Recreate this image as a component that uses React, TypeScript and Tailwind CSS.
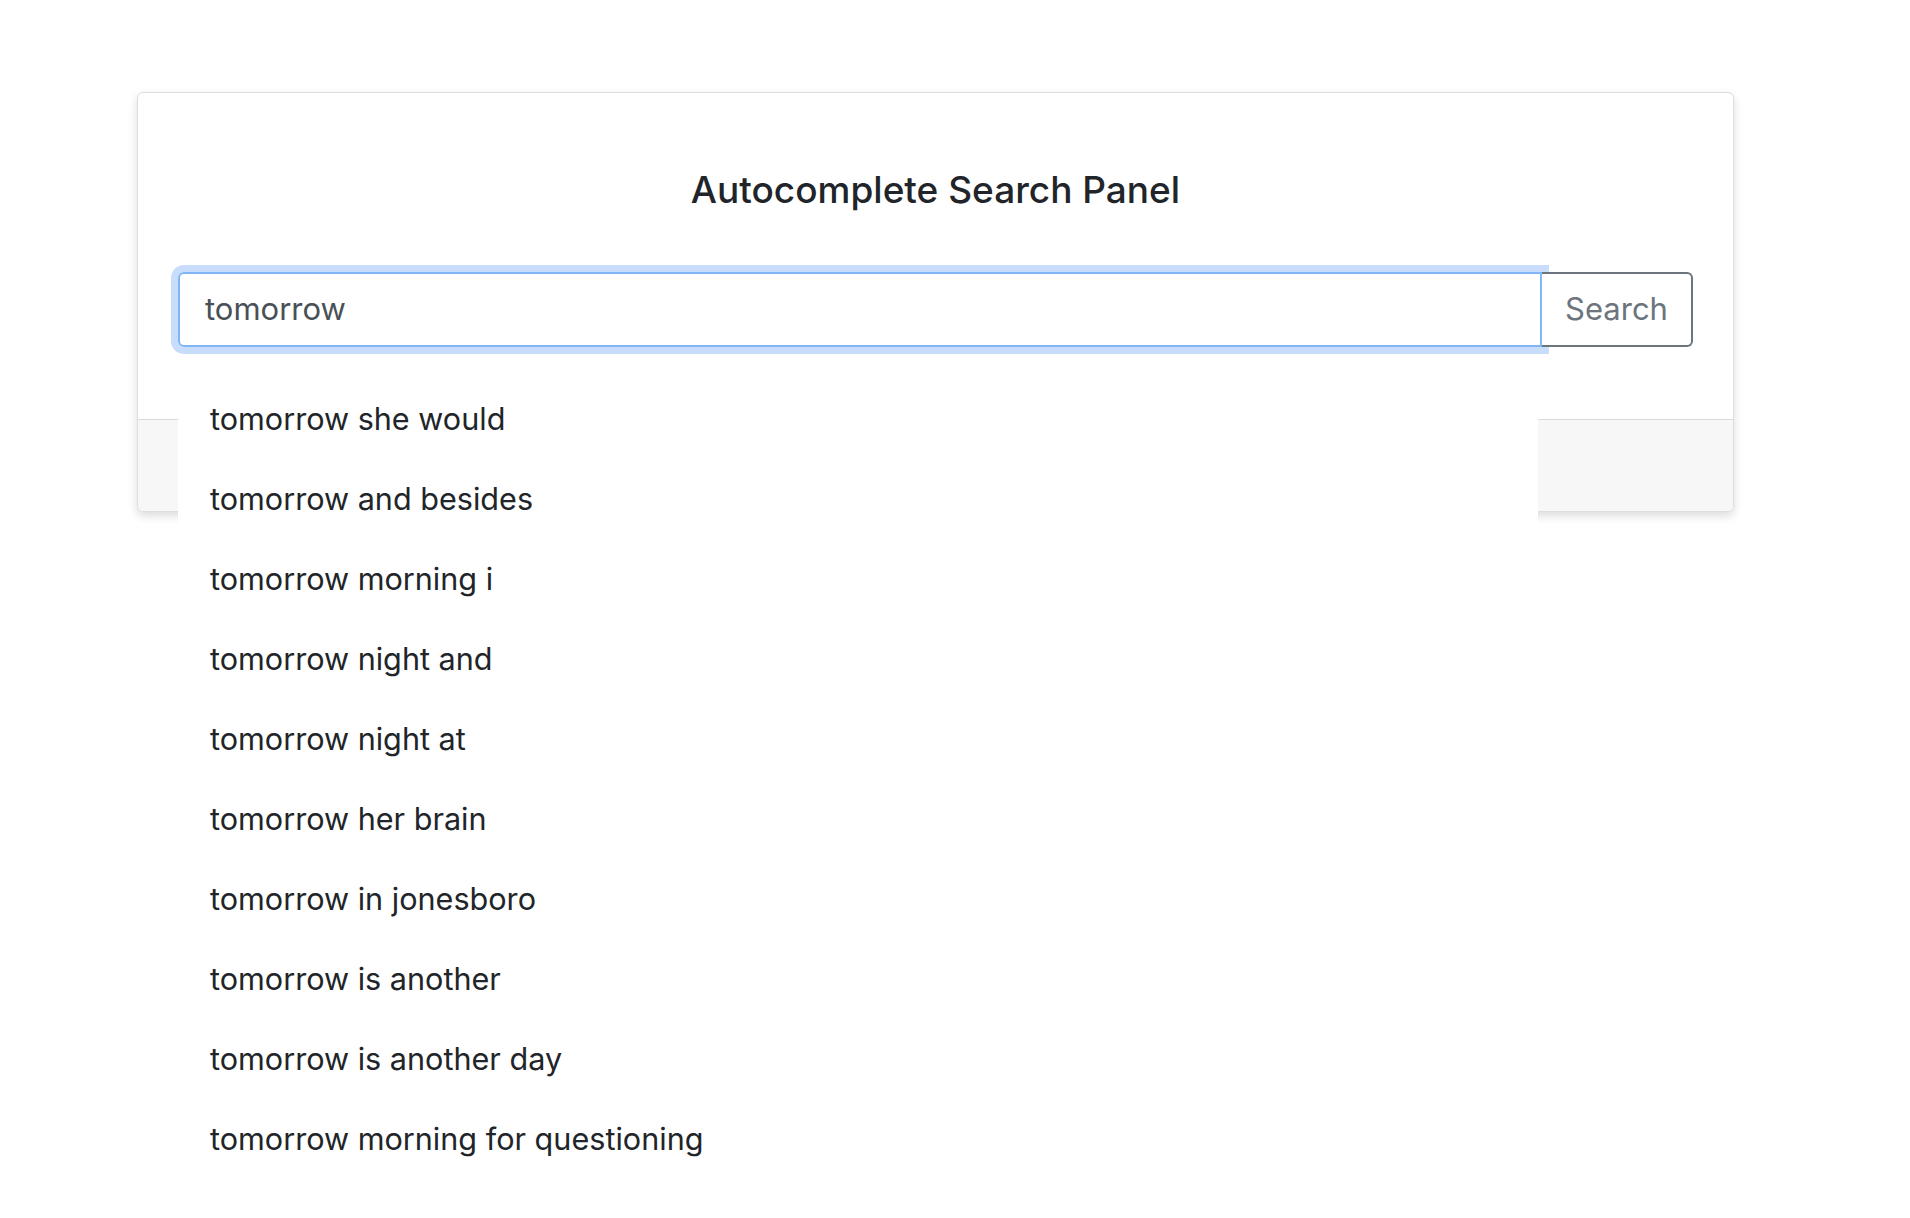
import { useState } from "react";

const suggestions = [
  "tomorrow she would",
  "tomorrow and besides",
  "tomorrow morning i",
  "tomorrow night and",
  "tomorrow night at",
  "tomorrow her brain",
  "tomorrow in jonesboro",
  "tomorrow is another",
  "tomorrow is another day",
  "tomorrow morning for questioning",
];

export default function App() {
  const [query, setQuery] = useState("tomorrow ");

  return (
    <div className="min-h-screen bg-white pt-[92px] pl-[137px] font-['Inter','Noto_Sans',sans-serif] text-[#212529]">
      {/* card */}
      <div className="w-[1597px] rounded-[6px] border border-[#dedede] bg-white shadow-[0_4px_10px_rgba(0,0,0,0.14)]">
        <div className="px-[40px] pt-[73px] pb-[72px]">
          <h1 className="text-center text-[37px] leading-[48px] font-medium text-[#212529]">
            Autocomplete Search Panel
          </h1>

          {/* input group */}
          <div className="relative mt-[58px] flex">
            <div className="flex-1 rounded-l-[6px] shadow-[0_0_0_7px_#c8ddfb]">
              <div className="flex h-[75px] items-center rounded-l-[6px] border-2 border-[#80b6f6] bg-white pl-[25px]">
                <input
                  autoFocus
                  value={query}
                  onChange={(e) => setQuery(e.target.value)}
                  className="w-full bg-transparent text-[31px] text-[#495057] caret-[#212529] outline-none"
                />
              </div>
            </div>
            <button className="h-[75px] w-[151px] rounded-r-[6px] border-2 border-l-0 border-[#6c757d] bg-white text-[31px] text-[#6c757d]">
              Search
            </button>

            {/* suggestions dropdown */}
            <ul className="absolute left-0 top-[107px] z-10 w-[1360px] bg-white">
              {suggestions.map((s) => (
                <li
                  key={s}
                  className="flex h-[80px] items-center pl-[32px] text-[30.6px] text-[#212529]"
                >
                  {s}
                </li>
              ))}
            </ul>
          </div>
        </div>

        {/* card footer */}
        <div className="h-[92px] rounded-b-[6px] border-t border-[#dadada] bg-[#f7f7f7]" />
      </div>
    </div>
  );
}
